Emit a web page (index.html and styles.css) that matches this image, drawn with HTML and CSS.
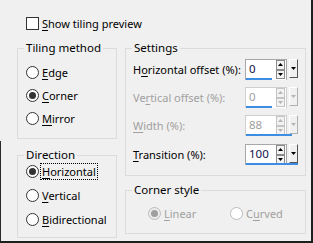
FILE: index.html
```html
<!DOCTYPE html>
<html>
<head>
<meta charset="utf-8">
<link rel="stylesheet" href="styles.css">
</head>
<body>
<div class="dlg">
  <div class="check-row"><span class="checkbox"></span><span class="txt"><u>S</u>how tiling preview</span></div>
  <div class="cols">
    <div class="col col-left">
      <fieldset class="group tiling">
        <legend>Tiling method</legend>
        <div class="radio-list">
          <div class="radio"><span class="circle"></span><span><u>E</u>dge</span></div>
          <div class="radio"><span class="circle on"></span><span><u>C</u>orner</span></div>
          <div class="radio"><span class="circle"></span><span><u>M</u>irror</span></div>
        </div>
      </fieldset>
      <fieldset class="group direction">
        <legend>Direction</legend>
        <div class="radio-list">
          <div class="radio"><span class="circle on"></span><span class="focus"><u>H</u>orizontal</span></div>
          <div class="radio"><span class="circle"></span><span><u>V</u>ertical</span></div>
          <div class="radio"><span class="circle"></span><span><u>B</u>idirectional</span></div>
        </div>
      </fieldset>
    </div>
    <div class="col col-right">
      <fieldset class="group settings">
        <legend>Settings</legend>
        <div class="rows">
          <div class="row">
            <span class="lbl">H<u>o</u>rizontal offset (%):</span>
            <div class="spin">
              <div class="spin-top">
                <div class="field"><span class="val">0</span><span class="arrows"><span class="arr up"><svg width="5" height="3" viewBox="0 0 5 3"><path d="M2.5 0 L5 3 L0 3Z"/></svg></span><span class="arr down"><svg width="5" height="3" viewBox="0 0 5 3"><path d="M0 0 L5 0 L2.5 3Z"/></svg></span></span></div>
                <div class="drop"><svg width="5" height="3" viewBox="0 0 5 3"><path d="M0 0 L5 0 L2.5 3Z"/></svg></div>
              </div>
              <div class="bar-track"><div class="bar" style="width:50%"></div></div>
            </div>
          </div>
          <div class="row disabled">
            <span class="lbl">Ve<u>r</u>tical offset (%):</span>
            <div class="spin">
              <div class="spin-top">
                <div class="field"><span class="val">0</span><span class="arrows"><span class="arr up"><svg width="5" height="3" viewBox="0 0 5 3"><path d="M2.5 0 L5 3 L0 3Z"/></svg></span><span class="arr down"><svg width="5" height="3" viewBox="0 0 5 3"><path d="M0 0 L5 0 L2.5 3Z"/></svg></span></span></div>
                <div class="drop"><svg width="5" height="3" viewBox="0 0 5 3"><path d="M0 0 L5 0 L2.5 3Z"/></svg></div>
              </div>
              <div class="bar-track"><div class="bar" style="width:50%"></div></div>
            </div>
          </div>
          <div class="row disabled">
            <span class="lbl"><u>W</u>idth (%):</span>
            <div class="spin">
              <div class="spin-top">
                <div class="field"><span class="val">88</span><span class="arrows"><span class="arr up"><svg width="5" height="3" viewBox="0 0 5 3"><path d="M2.5 0 L5 3 L0 3Z"/></svg></span><span class="arr down"><svg width="5" height="3" viewBox="0 0 5 3"><path d="M0 0 L5 0 L2.5 3Z"/></svg></span></span></div>
                <div class="drop"><svg width="5" height="3" viewBox="0 0 5 3"><path d="M0 0 L5 0 L2.5 3Z"/></svg></div>
              </div>
              <div class="bar-track"><div class="bar" style="width:88%"></div></div>
            </div>
          </div>
          <div class="row">
            <span class="lbl"><u>T</u>ransition (%):</span>
            <div class="spin">
              <div class="spin-top">
                <div class="field"><span class="val">100</span><span class="arrows"><span class="arr up"><svg width="5" height="3" viewBox="0 0 5 3"><path d="M2.5 0 L5 3 L0 3Z"/></svg></span><span class="arr down"><svg width="5" height="3" viewBox="0 0 5 3"><path d="M0 0 L5 0 L2.5 3Z"/></svg></span></span></div>
                <div class="drop"><svg width="5" height="3" viewBox="0 0 5 3"><path d="M0 0 L5 0 L2.5 3Z"/></svg></div>
              </div>
              <div class="bar-track"><div class="bar" style="width:100%"></div></div>
            </div>
          </div>
        </div>
      </fieldset>
      <fieldset class="group corner">
        <legend>Corner style</legend>
        <div class="corner-row">
          <div class="radio disabled"><span class="circle on"></span><span><u>L</u>inear</span></div>
          <div class="radio disabled"><span class="circle"></span><span>C<u>u</u>rved</span></div>
        </div>
      </fieldset>
    </div>
  </div>
</div>
</body>
</html>
```

FILE: styles.css
```css
html, body {
  margin: 0;
  padding: 0;
  background: #f0f0f0;
}

.dlg {
  width: 313px;
  height: 243px;
  box-sizing: border-box;
  background: linear-gradient(#2a2a2a, #2a2a2a) left bottom / 1px 100px no-repeat, #f0f0f0;
  border-right: 2px solid #1e1e1e;
  border-bottom: 2px solid #1e1e1e;
  font-family: "Noto Sans", "Open Sans", sans-serif;
  font-size: 11px;
  color: #000;
  padding-top: 15px;
  overflow: hidden;
}

u {
  text-decoration: underline;
  text-underline-offset: 2px;
}

.check-row {
  display: flex;
  align-items: center;
  height: 16px;
  margin-left: 26px;
  gap: 3px;
}

.checkbox {
  width: 11px;
  height: 11px;
  border: 1px solid #333;
  background: #fff;
  flex: none;
}

.cols {
  display: flex;
  gap: 8px;
  margin-top: 9px;
  margin-left: 17px;
}

.col {
  display: flex;
  flex-direction: column;
}

.col-left {
  width: 100px;
  gap: 8px;
}

.col-right {
  width: 181px;
  gap: 6px;
}

.group {
  margin: 0;
  padding: 0;
  border: 1px solid #dcdcdc;
  min-width: 0;
  box-sizing: border-box;
}

.group legend {
  margin-left: 6px;
  padding: 0 2px;
  line-height: 16px;
  height: 16px;
  font-size: 11.5px;
}

.tiling { height: 99px; }
.direction { height: 91px; }
.settings { height: 136px; }
.corner { height: 52px; }

.radio-list {
  display: flex;
  flex-direction: column;
  padding-left: 8px;
}

.tiling .radio-list {
  padding-top: 8px;
  gap: 7px;
}

.direction .radio-list {
  padding-top: 0;
  gap: 8px;
}

.radio {
  display: flex;
  align-items: center;
  height: 16px;
  gap: 3px;
  white-space: nowrap;
}

.circle {
  width: 11px;
  height: 11px;
  border: 1px solid #333;
  border-radius: 50%;
  background: #fff;
  flex: none;
  display: flex;
  align-items: center;
  justify-content: center;
}

.circle.on::after {
  content: "";
  width: 7px;
  height: 7px;
  border-radius: 50%;
  background: #333;
}

.focus {
  outline: 1px dotted #000;
  outline-offset: 0;
  padding: 0 1px;
  margin-left: -1px;
}

.rows {
  display: flex;
  flex-direction: column;
  padding-top: 3px;
  padding-left: 7px;
  gap: 7px;
}

.row {
  display: flex;
  align-items: center;
  height: 21px;
  white-space: nowrap;
}

.row:last-child {
  margin-top: 1px;
}

.lbl {
  width: 112px;
  flex: none;
}

.spin {
  width: 53px;
  height: 21px;
  display: flex;
  flex-direction: column;
}

.spin-top {
  display: flex;
  height: 19px;
  gap: 2px;
}

.field {
  width: 42px;
  box-sizing: border-box;
  height: 21px;
  border: 1px solid #a8a8a8;
  border-bottom: none;
  background: #fff;
  display: flex;
  align-items: stretch;
}

.val {
  flex: 1;
  padding-left: 3px;
  line-height: 18px;
  font-size: 11.5px;
  color: #10104a;
}

.arrows {
  width: 9px;
  display: flex;
  flex-direction: column;
  margin: 0 1px 1px 0;
}

.arr {
  flex: 1;
  display: flex;
  align-items: center;
  justify-content: center;
  border: 1px solid #8a8a8a;
  background: #f3f3f3;
}

.arr svg path, .drop svg path {
  fill: #000;
}

.drop {
  width: 9px;
  height: 19px;
  box-sizing: border-box;
  background: #f0f0f0;
  border-top: 1px solid #fff;
  border-left: 1px solid #fff;
  border-right: 1px solid #555;
  border-bottom: 1px solid #555;
  display: flex;
  align-items: center;
  justify-content: center;
}

.bar-track {
  height: 2px;
  margin-left: 1px;
}

.bar {
  height: 2px;
  background: #3d8ee3;
}

.disabled .lbl,
.disabled .val,
.radio.disabled {
  color: #a0a0a0;
}

.disabled .arr {
  border-color: #c4c4c4;
}

.disabled .arr svg path,
.disabled .drop svg path {
  fill: #b4b4b4;
}

.disabled .field {
  border-color: #cfcfcf;
}

.disabled .drop {
  border-right-color: #b0b0b0;
  border-bottom-color: #b0b0b0;
}

.corner-row {
  display: flex;
  padding-top: 7px;
  padding-left: 22px;
}

.corner-row .radio:first-child {
  width: 82px;
}

.radio.disabled .circle {
  border-color: #bcbcbc;
  background: #fff;
}

.radio.disabled .circle.on {
  background: #ececec;
}

.radio.disabled .circle.on::after {
  background: #a0a0a0;
}
```
